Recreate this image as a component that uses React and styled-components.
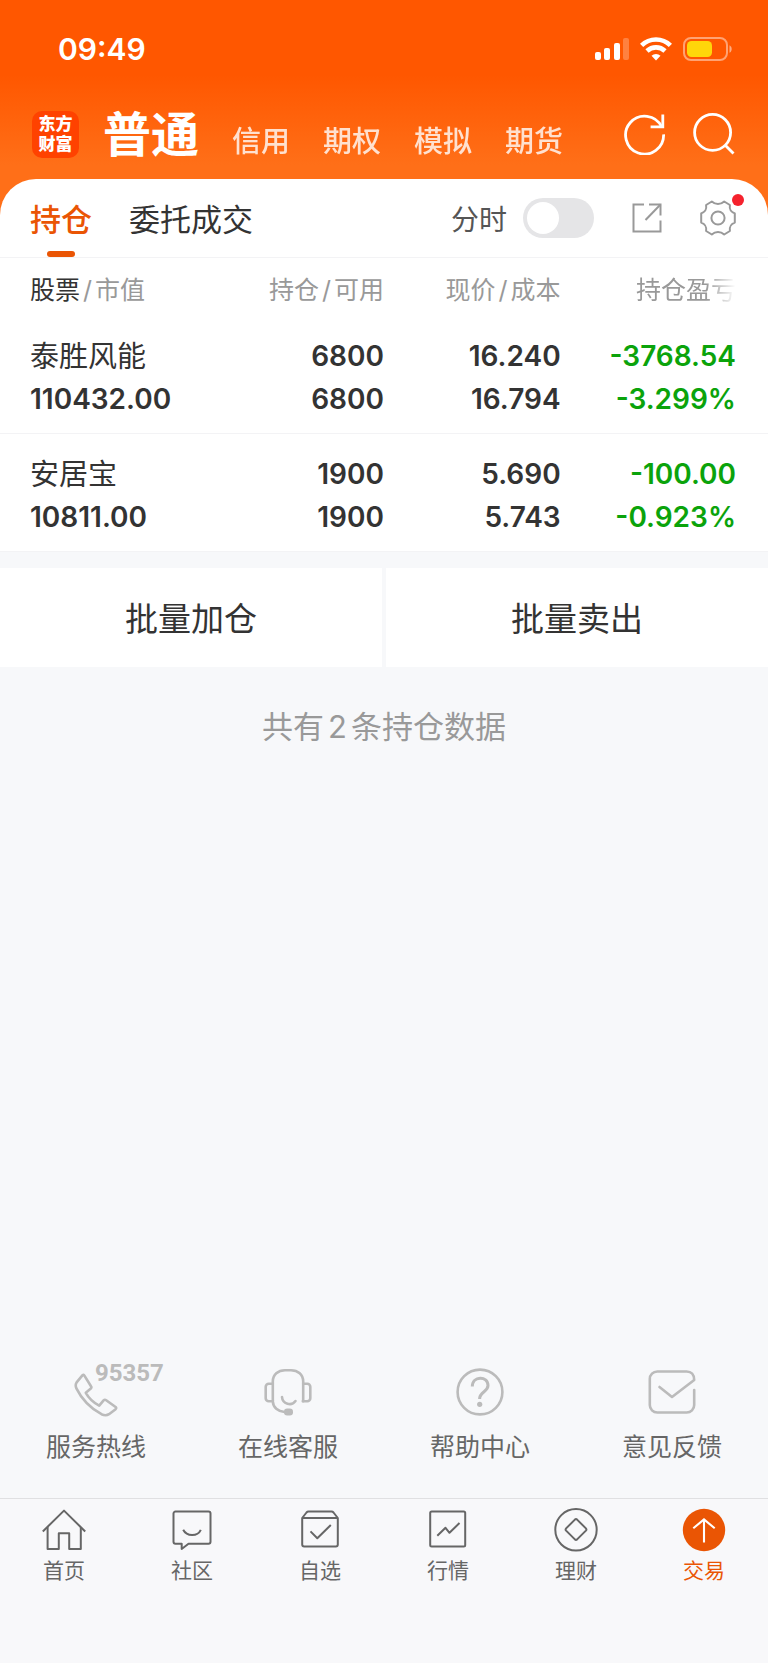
import React, { useState } from "react";
import styled, { createGlobalStyle } from "styled-components";

const GlobalStyle = createGlobalStyle`
  * {
    box-sizing: border-box;
  }

  body {
    margin: 0;
    background: #f7f8fa;
    font-family: Inter, "Noto Sans CJK SC", sans-serif;
    color: #333;
  }

  button {
    padding: 0;
    border: 0;
    background: none;
    font: inherit;
    color: inherit;
    cursor: pointer;
  }
`;

const accounts = ["信用", "期权", "模拟", "期货"];

const holdings = [
  {
    name: "泰胜风能",
    value: "110432.00",
    total: "6800",
    usable: "6800",
    price: "16.240",
    cost: "16.794",
    profit: "-3768.54",
    rate: "-3.299%",
  },
  {
    name: "安居宝",
    value: "10811.00",
    total: "1900",
    usable: "1900",
    price: "5.690",
    cost: "5.743",
    profit: "-100.00",
    rate: "-0.923%",
  },
];

const SignalIcon = () => (
  <svg width="34" height="24" viewBox="0 0 34 24" fill="#fff" aria-hidden="true">
    <rect x="0" y="15" width="6" height="8" rx="2" />
    <rect x="9" y="11" width="6" height="12" rx="2" />
    <rect x="19" y="6" width="6" height="17" rx="2" />
    <rect x="28" y="1" width="6" height="22" rx="2" opacity="0.25" />
  </svg>
);

const WifiIcon = () => (
  <svg width="32" height="24" viewBox="0 0 32 24" fill="none" stroke="#fff" strokeWidth="4.6" aria-hidden="true">
    <path d="M1.6 8.4a20.6 20.6 0 0 1 28.8 0" />
    <path d="M7 14a13 13 0 0 1 18 0" />
    <path d="M16 23.4l-4.5-4.6a6.6 6.6 0 0 1 9 0z" fill="#fff" stroke="none" />
  </svg>
);

const BatteryIcon = () => (
  <svg width="50" height="24" viewBox="0 0 50 24" aria-hidden="true">
    <rect x="1" y="1" width="43" height="22" rx="7" fill="none" stroke="#fff" strokeOpacity="0.45" strokeWidth="2" />
    <rect x="4" y="4" width="25" height="16" rx="4.5" fill="#ffd60a" />
    <path d="M46.5 8.2a4.4 4.4 0 0 1 0 7.6z" fill="#fff" fillOpacity="0.5" />
  </svg>
);

const RefreshIcon = () => (
  <svg width="42" height="42" viewBox="0 0 42 42" fill="none" stroke="#fff" strokeWidth="2.8" aria-hidden="true">
    <path d="M39.6 21.4A19 19 0 1 1 37.6 13.6" />
    <path d="M38.8 1.5v12.3H26.6" />
  </svg>
);

const SearchIcon = () => (
  <svg width="42" height="42" viewBox="0 0 42 42" fill="none" stroke="#fff" strokeWidth="2.8" aria-hidden="true">
    <circle cx="19.6" cy="19.4" r="18" />
    <path d="M32 32l8.5 8.5" />
  </svg>
);

const ShareIcon = () => (
  <svg width="30" height="30" viewBox="0 0 30 30" fill="none" stroke="#999" strokeWidth="2" aria-hidden="true">
    <path d="M12 1.5H1.5v27h27V17.5" />
    <path d="M17 1.5h11.5V12.5" />
    <path d="M28.5 1.5L13.5 17" />
  </svg>
);

const GearIcon = () => (
  <svg width="36" height="36" viewBox="0 0 36 36" fill="none" stroke="#999" strokeWidth="2" strokeLinejoin="round" aria-hidden="true">
    <path d="M34.8 22.6C30.4 24.4 29.2 26.600 29.900 31L24.200 34.500C20.600 31.200 15.400 31.200 11.800 34.500L6.100 31C6.800 26.600 5.600 24.400 1.200 22.600V13.400C5.600 11.600 6.800 9.400 6.100 5L11.800 1.500C15.400 4.800 20.600 4.800 24.200 1.500L29.900 5C29.200 9.400 30.400 11.600 34.800 13.400Z" />
    <circle cx="18" cy="18" r="6.6" />
  </svg>
);

const PhoneIcon = () => (
  <svg width="44" height="50" viewBox="0 -6 44 50" fill="none" stroke="#bbb" strokeWidth="2.6" strokeLinejoin="round" aria-hidden="true">
    <path d="M8.6 2.2L2.6 9.4C1.5 11 1.4 13 2.4 15.4C7.6 26 16 35 27.5 41.2C30.5 42.6 32.8 42.6 35 41.2L41.6 36.2C42.4 35.4 42.4 34.8 41.6 34L32.2 27.2C31.2 26.5 30.4 26.6 29.6 27.4L25.2 32.6C19.6 29.6 14.8 25.2 11.8 19.8L16.8 15.6C17.6 14.8 17.7 14.2 17 13.2L10.4 2.6C9.8 1.6 9.2 1.6 8.6 2.2Z" />
  </svg>
);

const HeadsetIcon = () => (
  <svg width="48" height="48" viewBox="0 0 48 48" fill="none" stroke="#bbb" strokeWidth="2.6" strokeLinecap="round" aria-hidden="true">
    <path d="M8.8 33V13.5C8.8 6.5 14 2.2 21 2.2h6c7 0 12.2 4.3 12.2 11.3V33.2" />
    <path d="M8.8 15.7H4.7a3 3 0 0 0-3 3v11.6a3 3 0 0 0 3 3h4.1C9 39.5 14 43.5 20.5 44" />
    <path d="M39.2 15.7h4.1a3 3 0 0 1 3 3v11.6a3 3 0 0 1-3 3H38.8" />
    <path d="M18 29c.5 7 9.5 9.5 13.5 4" />
    <rect x="20" y="40.5" width="9" height="7" rx="3.2" fill="#bbb" stroke="none" />
  </svg>
);

const HelpIcon = () => (
  <svg width="48" height="48" viewBox="0 0 48 48" fill="none" stroke="#bbb" strokeWidth="2.6" aria-hidden="true">
    <circle cx="24" cy="24" r="22.4" />
    <path d="M16.3 18.6C16.3 7.5 32 7.5 32 17.5c0 6.5-8.4 6-8.4 13.5" strokeWidth="3" />
    <circle cx="23.7" cy="36.3" r="2.6" fill="#bbb" stroke="none" />
  </svg>
);

const MailIcon = () => (
  <svg width="48" height="48" viewBox="0 0 48 48" fill="none" stroke="#bbb" strokeWidth="2.6" strokeLinecap="round" strokeLinejoin="round" aria-hidden="true">
    <path d="M46.2 22v15a7.5 7.5 0 0 1-7.5 7.5H9.3A7.5 7.5 0 0 1 1.8 37V11a7.5 7.5 0 0 1 7.5-7.5h29.4c4.5 0 7.5 3 7.5 8.5L24 29 11.5 19" />
  </svg>
);

const HomeIcon = () => (
  <svg width="44" height="44" viewBox="0 0 44 44" fill="none" stroke="#666" strokeWidth="2" strokeLinejoin="round" aria-hidden="true">
    <path d="M.8 23.5L22 2.6 43.2 23.5" />
    <path d="M5.6 19v22h11.2V25.2h10.4V41h11.6V19" />
  </svg>
);

const CommunityIcon = () => (
  <svg width="44" height="44" viewBox="0 0 44 44" fill="none" stroke="#666" strokeWidth="2" strokeLinejoin="round" aria-hidden="true">
    <path d="M5.5 3.6h33a2 2 0 0 1 2 2v28.2a2 2 0 0 1-2 2H18.5L11.7 41v-5.2H5.5a2 2 0 0 1-2-2V5.6a2 2 0 0 1 2-2z" />
    <path d="M13.2 21.8c3.6 7 14.4 7 17.6 0" />
  </svg>
);

const WatchIcon = () => (
  <svg width="44" height="44" viewBox="0 0 44 44" fill="none" stroke="#666" strokeWidth="2" strokeLinejoin="round" aria-hidden="true">
    <path d="M4.2 10L8.5 4.5q.8-.9 2-.9h23q1.2 0 2 .9L39.8 10v26.5a2 2 0 0 1-2 2H6.2a2 2 0 0 1-2-2z" />
    <path d="M4.2 10h35.6" />
    <path d="M12.5 23.4l6.8 6.8 13.5-13.2" />
  </svg>
);

const MarketIcon = () => (
  <svg width="44" height="44" viewBox="0 0 44 44" fill="none" stroke="#666" strokeWidth="2" strokeLinejoin="round" aria-hidden="true">
    <rect x="4.2" y="3.6" width="35" height="35" rx="1.5" />
    <path d="M11.3 27.8l8.2-8 4 5L33.5 15" />
  </svg>
);

const WealthIcon = () => (
  <svg width="44" height="44" viewBox="0 0 44 44" fill="none" stroke="#666" strokeWidth="2" strokeLinejoin="round" aria-hidden="true">
    <circle cx="22" cy="21.8" r="20.7" />
    <path d="M20.9 11.6q1.1-1 2.2 0l8.8 8.8q1 1.1 0 2.2l-8.8 8.8q-1.1 1-2.2 0l-8.8-8.8q-1-1.1 0-2.2z" />
  </svg>
);

const TradeIcon = () => (
  <svg width="44" height="44" viewBox="0 0 44 44" fill="none" stroke="#fff" strokeWidth="2.1" aria-hidden="true">
    <circle cx="22" cy="22" r="21.2" fill="#ea5504" stroke="none" />
    <path d="M22 34.5V11.4M11.3 20.3L22 11.4l10.7 8.9" />
  </svg>
);

const services = [
  { label: "服务热线", icon: <PhoneIcon />, badge: "95357" },
  { label: "在线客服", icon: <HeadsetIcon /> },
  { label: "帮助中心", icon: <HelpIcon /> },
  { label: "意见反馈", icon: <MailIcon /> },
];

const tabs = [
  { label: "首页", icon: <HomeIcon /> },
  { label: "社区", icon: <CommunityIcon /> },
  { label: "自选", icon: <WatchIcon /> },
  { label: "行情", icon: <MarketIcon /> },
  { label: "理财", icon: <WealthIcon /> },
  { label: "交易", icon: <TradeIcon />, active: true },
];

const App = () => {
  const [timeline, setTimeline] = useState(false);

  return (
    <Page>
      <GlobalStyle />
      <StatusBar>
        <Clock>09:49</Clock>
        <StatusIcons>
          <SignalIcon />
          <WifiIcon />
          <BatteryIcon />
        </StatusIcons>
      </StatusBar>
      <Header>
        <Logo>
          <span>东方</span>
          <span>财富</span>
        </Logo>
        <AccountNav>
          <AccountTab $active>普通</AccountTab>
          {accounts.map((item) => (
            <AccountTab key={item}>{item}</AccountTab>
          ))}
        </AccountNav>
        <HeaderActions>
          <IconButton aria-label="刷新"><RefreshIcon /></IconButton>
          <IconButton aria-label="搜索"><SearchIcon /></IconButton>
        </HeaderActions>
      </Header>

      <Panel>
        <Toolbar>
          <PanelTab $active>持仓</PanelTab>
          <PanelTab>委托成交</PanelTab>
          <Controls>
            <SwitchLabel>
              分时
              <Switch
                type="checkbox"
                checked={timeline}
                onChange={(e) => setTimeline(e.target.checked)}
              />
            </SwitchLabel>
            <IconButton aria-label="分享"><ShareIcon /></IconButton>
            <IconButton aria-label="设置">
              <GearIcon />
              <RedDot />
            </IconButton>
          </Controls>
        </Toolbar>

        <Table>
          <thead>
            <tr>
              <HeadCell scope="col"><Strong>股票</Strong><Slash>/</Slash>市值</HeadCell>
              <HeadCell scope="col">持仓<Slash>/</Slash>可用</HeadCell>
              <HeadCell scope="col">现价<Slash>/</Slash>成本</HeadCell>
              <HeadCell scope="col"><Fade>持仓盈亏</Fade></HeadCell>
            </tr>
          </thead>
          <tbody>
            {holdings.map((row) => (
              <Row key={row.name}>
                <Cell><Name>{row.name}</Name><Line>{row.value}</Line></Cell>
                <Cell><Line>{row.total}</Line><Line>{row.usable}</Line></Cell>
                <Cell><Line>{row.price}</Line><Line>{row.cost}</Line></Cell>
                <Cell $loss><Line>{row.profit}</Line><Line>{row.rate}</Line></Cell>
              </Row>
            ))}
          </tbody>
        </Table>
      </Panel>

      <BatchActions>
        <BatchButton>批量加仓</BatchButton>
        <BatchButton>批量卖出</BatchButton>
      </BatchActions>

      <Summary>共有<Count>2</Count>条持仓数据</Summary>

      <Services>
        {services.map((item) => (
          <Service key={item.label} href="#">
            <ServiceIcon>
              {item.icon}
              {item.badge && <Hotline>{item.badge}</Hotline>}
            </ServiceIcon>
            {item.label}
          </Service>
        ))}
      </Services>

      <TabBar>
        {tabs.map((item) => (
          <TabLink key={item.label} href="#" $active={item.active}>
            {item.icon}
            {item.label}
          </TabLink>
        ))}
      </TabBar>
    </Page>
  );
};

const Page = styled.div`
  display: flex;
  flex-direction: column;
  min-height: 100vh;
  background: linear-gradient(#ff5700 75px, #ff6f18 165px) no-repeat top / 100% 240px;
`;

const StatusBar = styled.div`
  display: flex;
  align-items: center;
  justify-content: space-between;
  height: 98px;
  padding: 0 35px 0 58px;
  color: #fff;
`;

const Clock = styled.span`
  font-size: 30px;
  font-weight: 600;
`;

const StatusIcons = styled.div`
  display: flex;
  align-items: center;
  gap: 11px;
`;

const Header = styled.header`
  display: flex;
  align-items: center;
  height: 81px;
  padding: 0 33px 9px 32px;
  color: #fff;
`;

const Logo = styled.div`
  display: flex;
  flex-direction: column;
  align-items: center;
  justify-content: center;
  width: 47px;
  height: 47px;
  border-radius: 10px;
  background: #ff4200;
  font-size: 17px;
  font-weight: 900;
  line-height: 20px;
`;

const AccountNav = styled.nav`
  display: flex;
  align-items: baseline;
  gap: 33px;
  margin-left: 24px;
  padding-top: 8px;
`;

const AccountTab = styled.button`
  font-size: ${(p) => (p.$active ? 48 : 29)}px;
  font-weight: ${(p) => (p.$active ? 700 : 500)};
  line-height: 60px;
  opacity: ${(p) => (p.$active ? 1 : 0.8)};
`;

const HeaderActions = styled.div`
  display: flex;
  gap: 27px;
  margin-left: auto;
`;

const IconButton = styled.button`
  position: relative;
  display: flex;
`;

const Panel = styled.main`
  border-radius: 36px 36px 0 0;
  background: #fff;
`;

const Toolbar = styled.div`
  display: flex;
  gap: 37px;
  height: 79px;
  padding: 0 32px 0 30px;
  border-bottom: 1px solid #f3f3f5;
`;

const PanelTab = styled.button`
  position: relative;
  padding-bottom: 2px;
  font-size: 31px;
  font-weight: ${(p) => (p.$active ? 500 : 400)};
  color: ${(p) => (p.$active ? "#ea5504" : "#333")};

  &::after {
    content: "";
    display: ${(p) => (p.$active ? "block" : "none")};
    position: absolute;
    left: 50%;
    bottom: 0;
    width: 28px;
    height: 6px;
    margin-left: -14px;
    border-radius: 3px;
    background: #ea5504;
  }
`;

const Controls = styled.div`
  display: flex;
  align-items: center;
  gap: 38px;
  margin-left: auto;
`;

const SwitchLabel = styled.label`
  display: flex;
  align-items: center;
  gap: 16px;
  font-size: 28px;
  color: #555;
`;

const Switch = styled.input`
  appearance: none;
  display: flex;
  width: 71px;
  height: 40px;
  margin: 0;
  padding: 4px;
  border-radius: 20px;
  background: #e5e5e7;

  &::before {
    content: "";
    width: 32px;
    height: 32px;
    border-radius: 50%;
    background: #fff;
  }

  &:checked {
    justify-content: flex-end;
    background: #ea5504;
  }
`;

const RedDot = styled.i`
  position: absolute;
  top: -6px;
  right: -8px;
  width: 12px;
  height: 12px;
  border-radius: 50%;
  background: #f5222d;
`;

const Table = styled.table`
  width: 100%;
  table-layout: fixed;
  border-collapse: collapse;
`;

const HeadCell = styled.th`
  width: 23%;
  padding: 6px 0 0;
  font-size: 25px;
  font-weight: 400;
  line-height: 52px;
  text-align: right;
  white-space: nowrap;
  color: #999;

  &:first-child {
    width: 27%;
    padding-left: 30px;
    text-align: left;
  }

  &:last-child {
    width: 27%;
    padding-right: 32px;
  }
`;

const Strong = styled.span`
  color: #333;
`;

const Slash = styled.span`
  margin: 0 3px;
`;

const Fade = styled.span`
  display: inline-block;
  mask-image: linear-gradient(to right, #000 70%, transparent);
`;

const Row = styled.tr`
  border-bottom: 1px solid #f3f3f5;
`;

const Cell = styled.td`
  padding: 19px 0 12px;
  text-align: right;
  color: ${(p) => (p.$loss ? "#0ba30b" : "#333")};

  &:first-child {
    padding-left: 30px;
    text-align: left;
  }

  &:last-child {
    padding-right: 32px;
  }
`;

const Line = styled.div`
  font-size: 28px;
  font-weight: 600;
  line-height: 43px;
`;

const Name = styled(Line)`
  font-size: 29px;
  font-weight: 400;
`;

const BatchActions = styled.div`
  display: flex;
  gap: 4px;
  padding-top: 16px;
  background: #f7f8fa;
`;

const BatchButton = styled.button`
  flex: 1;
  height: 99px;
  padding-bottom: 2px;
  background: #fff;
  font-size: 33px;
`;

const Summary = styled.p`
  margin: 37px 0 0;
  font-size: 31px;
  line-height: 46px;
  text-align: center;
  color: #999;
`;

const Count = styled.span`
  margin: 0 4px;
`;

const Services = styled.nav`
  display: grid;
  grid-template-columns: repeat(4, 1fr);
  margin-top: auto;
  padding-bottom: 33px;
`;

const Service = styled.a`
  display: flex;
  flex-direction: column;
  align-items: center;
  gap: 12px;
  font-size: 25px;
  line-height: 36px;
  text-decoration: none;
  color: #666;
`;

const ServiceIcon = styled.span`
  position: relative;
  display: flex;
  align-items: center;
  height: 50px;
`;

const Hotline = styled.span`
  position: absolute;
  left: 21px;
  top: -8px;
  font-family: Roboto, sans-serif;
  font-size: 24px;
  font-weight: 700;
  line-height: 28px;
  color: #bbb;
`;

const TabBar = styled.nav`
  display: grid;
  grid-template-columns: repeat(6, 1fr);
  height: 165px;
  padding-top: 9px;
  border-top: 1px solid #e0e0e2;
  background: #f8f8fa;
`;

const TabLink = styled.a`
  display: flex;
  flex-direction: column;
  align-items: center;
  gap: 4px;
  font-size: 21px;
  line-height: 30px;
  text-decoration: none;
  color: ${(p) => (p.$active ? "#ea5504" : "#666")};
`;

export default App;
